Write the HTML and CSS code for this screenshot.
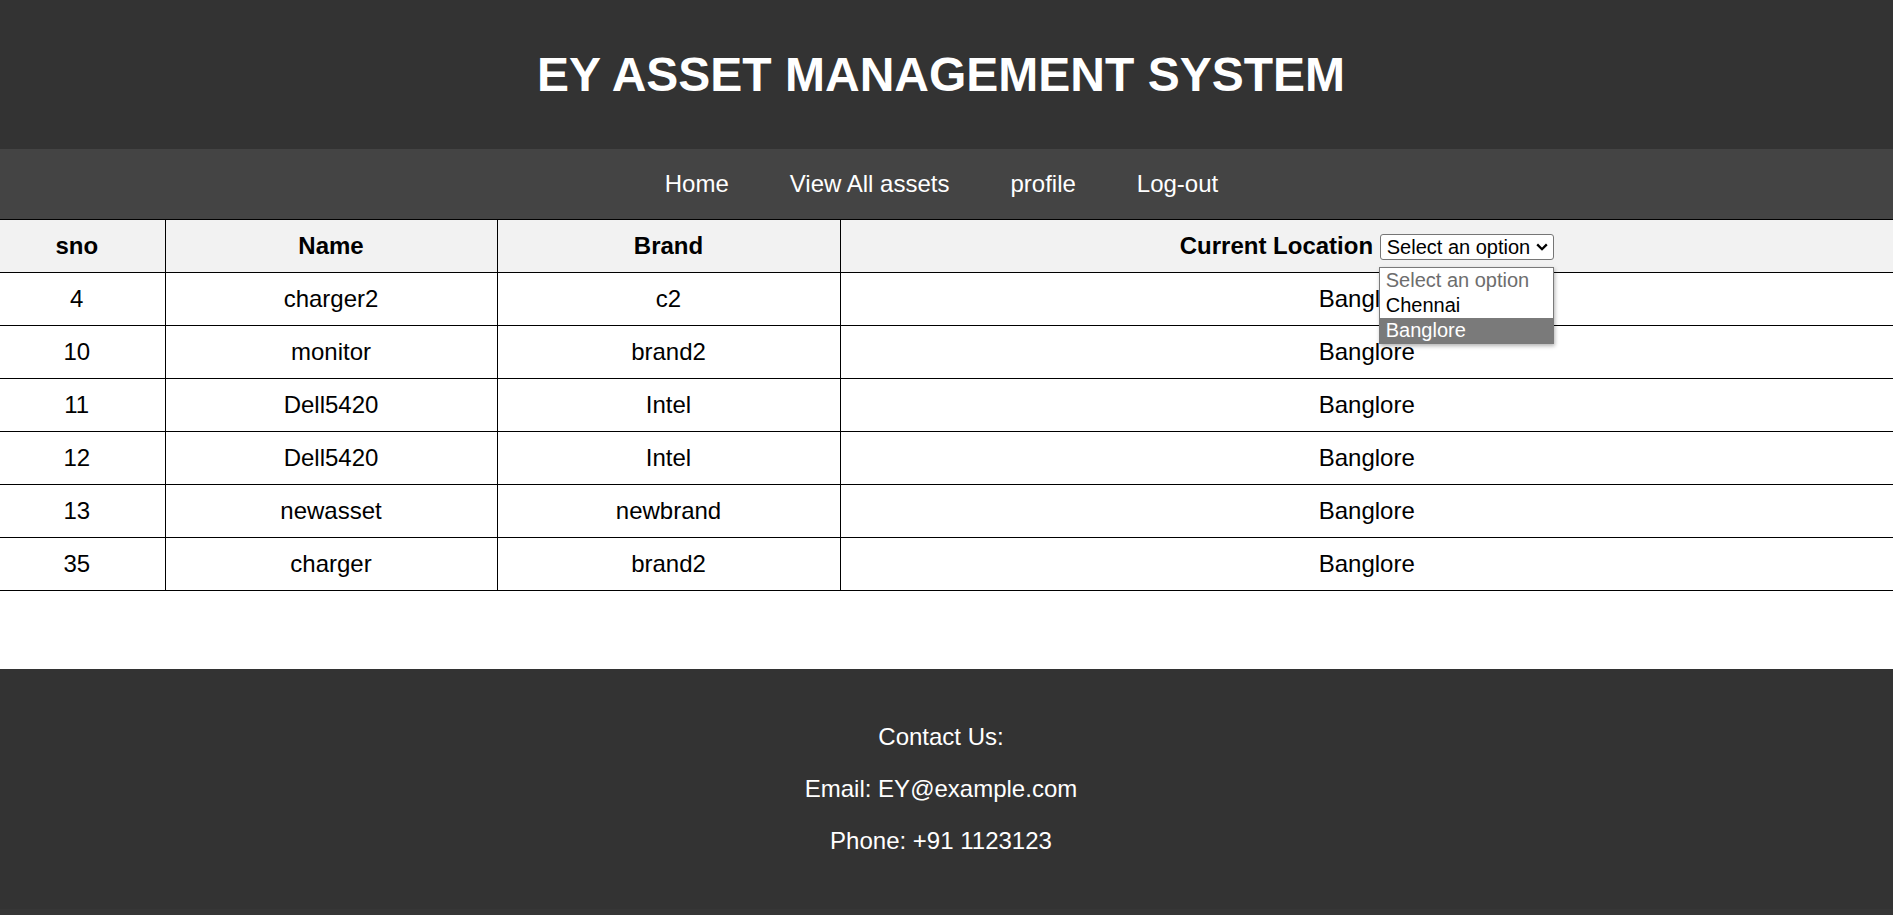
FILE: index.html
```html
<!DOCTYPE html>
<html lang="en">
<head>
<meta charset="utf-8">
<title>EY Asset Management System</title>
<link rel="stylesheet" href="styles.css">
</head>
<body>
<header class="site-header">
  <h1 class="site-title">EY ASSET MANAGEMENT SYSTEM</h1>
</header>
<nav class="site-nav">
  <a href="#" class="nav-link">Home</a>
  <a href="#" class="nav-link">View All assets</a>
  <a href="#" class="nav-link">profile</a>
  <a href="#" class="nav-link">Log-out</a>
</nav>
<main class="content">
  <table class="asset-table">
    <colgroup>
      <col class="col-sno">
      <col class="col-name">
      <col class="col-brand">
      <col class="col-loc">
    </colgroup>
    <thead>
      <tr>
        <th>sno</th>
        <th>Name</th>
        <th>Brand</th>
        <th>Current Location <span class="select-wrap"><select class="loc-select"><option>Select an option</option><option>Chennai</option><option>Banglore</option></select><svg class="select-chevron" width="12" height="8" viewBox="0 0 12 8"><path d="M1.2 1.4 L6 6.2 L10.8 1.4" fill="none" stroke="#000" stroke-width="2.3"/></svg><span class="select-list"><span class="select-item placeholder">Select an option</span><span class="select-item">Chennai</span><span class="select-item active">Banglore</span></span></span></th>
      </tr>
    </thead>
    <tbody>
      <tr><td>4</td><td>charger2</td><td>c2</td><td>Banglore</td></tr>
      <tr><td>10</td><td>monitor</td><td>brand2</td><td>Banglore</td></tr>
      <tr><td>11</td><td>Dell5420</td><td>Intel</td><td>Banglore</td></tr>
      <tr><td>12</td><td>Dell5420</td><td>Intel</td><td>Banglore</td></tr>
      <tr><td>13</td><td>newasset</td><td>newbrand</td><td>Banglore</td></tr>
      <tr><td>35</td><td>charger</td><td>brand2</td><td>Banglore</td></tr>
    </tbody>
  </table>
</main>
<footer class="site-footer">
  <p>Contact Us:</p>
  <p>Email: EY@example.com</p>
  <p>Phone: +91 1123123</p>
</footer>
</body>
</html>
```
FILE: styles.css
```css
html, body {
  margin: 0;
  padding: 0;
}
body {
  font-family: "Liberation Sans", Arial, sans-serif;
  font-size: 24px;
  line-height: 28px;
  color: #000;
  background: #363636;
}
.site-header {
  background: #333333;
  color: #fff;
  text-align: center;
  padding: 15px 11px 15px 0;
}
.site-title {
  margin: 32px 0;
  font-size: 48px;
  line-height: 55px;
  font-weight: bold;
}
.site-nav {
  background: #444444;
  display: flex;
  justify-content: center;
  gap: 61px;
  padding: 21px 10px 21px 0;
}
.nav-link {
  color: #fff;
  text-decoration: none;
}
.content {
  background: #fff;
  padding-bottom: 78px;
  overflow: hidden;
}
.asset-table {
  width: calc(100% + 11px);
  margin-left: -11px;
  border-collapse: collapse;
  table-layout: fixed;
}
.col-sno { width: 176px; }
.col-name { width: 332px; }
.col-brand { width: 343px; }
.asset-table th,
.asset-table td {
  border: 1px solid #000;
  padding: 12px 0;
  text-align: center;
  font-weight: normal;
}
.asset-table th {
  background: #f2f2f2;
  font-weight: bold;
}
.asset-table th:first-child,
.asset-table td:first-child {
  border-left: none;
}
.asset-table th:last-child,
.asset-table td:last-child {
  border-right: none;
}
.select-wrap {
  position: relative;
  display: inline-flex;
  font-weight: normal;
  font-size: 20px;
}
.loc-select {
  appearance: none;
  -webkit-appearance: none;
  box-sizing: border-box;
  width: 174px;
  height: 26px;
  margin: 0;
  padding: 0 22px 0 6px;
  font-family: "Liberation Sans", Arial, sans-serif;
  font-size: 20px;
  color: #000;
  background: #fff;
  border: 1px solid #767676;
  border-radius: 3px;
}
.select-chevron {
  position: absolute;
  right: 6px;
  top: 9px;
  pointer-events: none;
}
.select-list {
  position: absolute;
  top: 33px;
  left: -1px;
  width: 175px;
  box-sizing: border-box;
  background: #fff;
  border: 1px solid #7a7a7a;
  box-shadow: 1px 2px 4px rgba(0, 0, 0, 0.3);
  display: flex;
  flex-direction: column;
  z-index: 10;
  text-align: left;
}
.select-item {
  display: block;
  height: 25px;
  line-height: 24px;
  padding-left: 6px;
  font-size: 20px;
  color: #000;
}
.select-item.placeholder {
  color: #6d6d6d;
}
.select-item.active {
  background: #7a7a7a;
  color: #fff;
}
.site-footer {
  background: #333333;
  color: #fff;
  text-align: center;
  padding: 30px 11px 30px 0;
}
.site-footer p {
  margin: 24px 0;
}
```
